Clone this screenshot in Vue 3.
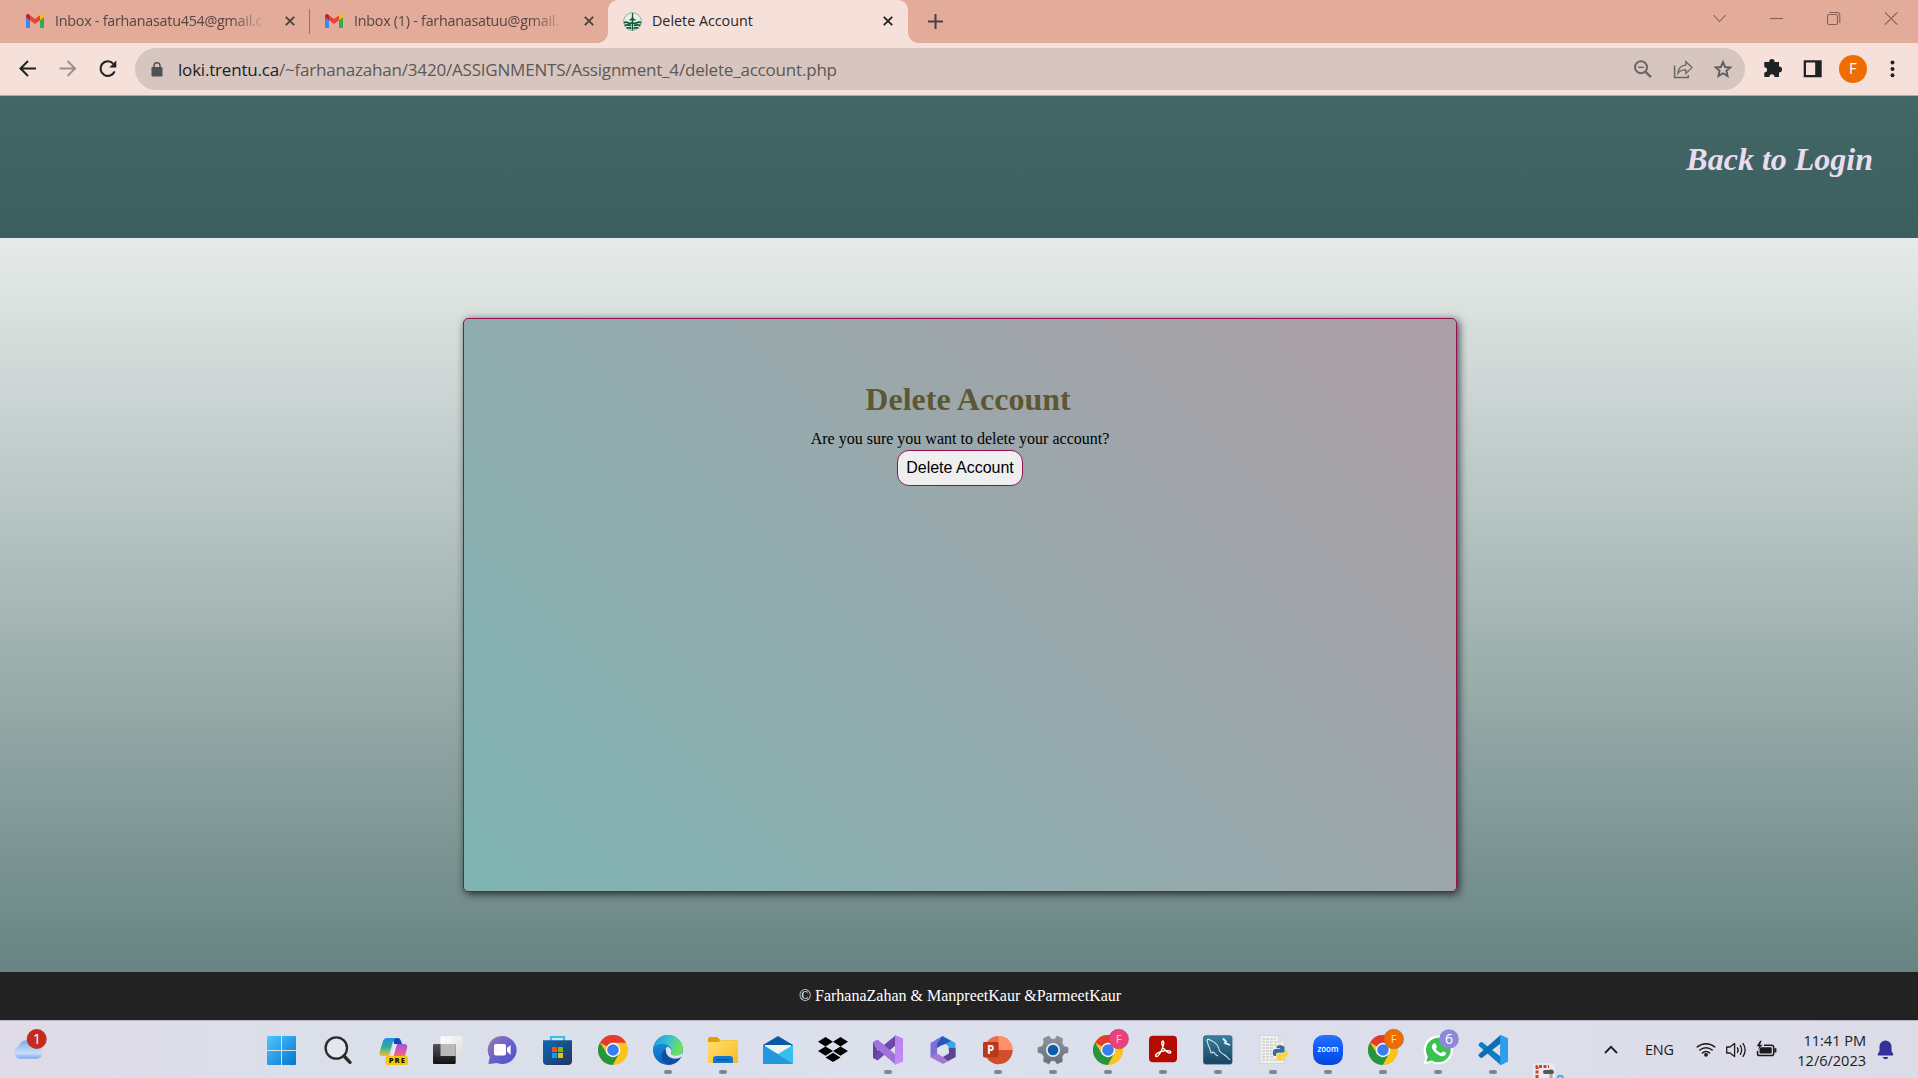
<script setup>
const tabs = [
  { title: 'Inbox - farhanasatu454@gmail.c', kind: 'mail' },
  { title: 'Inbox (1) - farhanasatuu@gmail.', kind: 'mail' },
]
const running = new Set(['edge', 'folder', 'vs', 'ppt', 'gear', 'chromeF', 'acrobat', 'mysql', 'python', 'zoom', 'chromeO', 'whatsapp', 'vscode', 'snip'])
const apps = ['windows', 'search', 'copilot', 'taskview', 'chat', 'store', 'chrome', 'edge', 'folder', 'mail', 'dropbox', 'vs', 'm365', 'ppt', 'gear', 'chromeF', 'acrobat', 'mysql', 'python', 'zoom', 'chromeO', 'whatsapp', 'vscode', 'snip']
</script>

<template>
  <div class="screen">
    <svg class="defs" width="0" height="0" aria-hidden="true">
      <defs>
        <linearGradient id="gWin" x1="0" y1="0" x2="1" y2="1"><stop offset="0" stop-color="#4cc9fb" /><stop offset="1" stop-color="#0673d1" /></linearGradient>
        <linearGradient id="gCopA" x1="0" y1="0" x2="0" y2="1"><stop offset="0" stop-color="#1c8fe8" /><stop offset=".5" stop-color="#2fae9a" /><stop offset="1" stop-color="#e8c52d" /></linearGradient>
        <linearGradient id="gCopB" x1="0" y1="0" x2="0" y2="1"><stop offset="0" stop-color="#a14fe6" /><stop offset="1" stop-color="#fb6a73" /></linearGradient>
        <linearGradient id="gDark" x1="0" y1="0" x2="0" y2="1"><stop offset="0" stop-color="#555" /><stop offset="1" stop-color="#111" /></linearGradient>
        <linearGradient id="gLight" x1="0" y1="0" x2="1" y2="1"><stop offset="0" stop-color="#ffffff" /><stop offset="1" stop-color="#dcdcdc" /></linearGradient>
        <linearGradient id="gChat" x1="0" y1="0" x2="1" y2="1"><stop offset="0" stop-color="#a078b4" /><stop offset=".55" stop-color="#6560cc" /><stop offset="1" stop-color="#4f4fc4" /></linearGradient>
        <linearGradient id="gStore" x1="0" y1="0" x2="1" y2="1"><stop offset="0" stop-color="#0f68b5" /><stop offset="1" stop-color="#23355d" /></linearGradient>
        <linearGradient id="gEdge" x1="0" y1="0" x2="1" y2=".3"><stop offset="0" stop-color="#1b8fdc" /><stop offset=".5" stop-color="#35c1d6" /><stop offset="1" stop-color="#6fe05a" /></linearGradient>
        <linearGradient id="gEdgeB" x1="0" y1="0" x2="0" y2="1"><stop offset="0" stop-color="#1a9ae2" /><stop offset="1" stop-color="#0b60c0" /></linearGradient>
        <linearGradient id="gFold" x1="0" y1="0" x2="1" y2="1"><stop offset="0" stop-color="#ffdf73" /><stop offset="1" stop-color="#fbbb23" /></linearGradient>
        <linearGradient id="gVs" x1="0" y1="0" x2="0" y2="1"><stop offset="0" stop-color="#b184ee" /><stop offset="1" stop-color="#c98bf7" /></linearGradient>
        <linearGradient id="gGear" x1="0" y1="0" x2="0" y2="1"><stop offset="0" stop-color="#8d969c" /><stop offset="1" stop-color="#66707a" /></linearGradient>
        <linearGradient id="gSql" x1="0" y1="0" x2="0" y2="1"><stop offset="0" stop-color="#3a7f9f" /><stop offset="1" stop-color="#17425f" /></linearGradient>
        <linearGradient id="gZoom" x1="0" y1="0" x2="0" y2="1"><stop offset="0" stop-color="#2a72fb" /><stop offset=".45" stop-color="#0b5cff" /><stop offset="1" stop-color="#0747d8" /></linearGradient>
        <linearGradient id="gCloud" x1="0" y1="0" x2="0" y2="1"><stop offset="0" stop-color="#7fa9ec" /><stop offset=".7" stop-color="#c9dffa" /><stop offset="1" stop-color="#7fa6ee" /></linearGradient>
        <symbol id="chrome" viewBox="0 0 30 30">
          <circle cx="15" cy="15" r="15" fill="#fcc31e" />
          <path d="M15 15 L28 7.5 A15 15 0 0 0 2 7.5 Z" fill="#e23c30" />
          <path d="M2 7.5 A15 15 0 0 0 15 30 L21.2 18.6 L15 15 L8.8 18.6 Z" fill="#25963f" />
          <path d="M15 7.8 H28 A15 15 0 0 1 15 30 L21.4 18.6 Z" fill="#fcc31e" />
          <circle cx="15" cy="15" r="7.2" fill="#fff" /><circle cx="15" cy="15" r="5.8" fill="#3b7def" />
        </symbol>
        <symbol id="gmail" viewBox="0 0 18 14">
          <path d="M0 3 V12.5 Q0 14 1.3 14 H4 V6 Z" fill="#4285f4" />
          <path d="M18 3 V12.5 Q18 14 16.7 14 H14 V6 Z" fill="#34a853" />
          <path d="M4 1.2 L9 5 L14 1.2 V6.2 L9 10 L4 6.2 Z" fill="#ea4335" />
          <path d="M0 2 Q0 0 1.8 0 Q3 0 4 1.2 V6.2 L0 3.2 Z" fill="#c5221f" />
          <path d="M18 2 Q18 0 16.2 0 Q15 0 14 1.2 V6.2 L18 3.2 Z" fill="#fbbc04" />
        </symbol>
      </defs>
    </svg>

    <div class="tabstrip">
      <div v-for="(t, i) in tabs" :key="t.title" class="tab" :class="'tab' + i">
        <svg class="gm" width="18" height="14"><use href="#gmail" /></svg>
        <span class="tabtitle fade">{{ t.title }}</span>
        <svg class="x" width="10" height="10" viewBox="0 0 10 10"><path d="M.8 .8 L9.2 9.2 M9.2 .8 L.8 9.2" stroke="#4c3f3e" stroke-width="1.8" /></svg>
      </div>
      <div class="tab active">
        <svg class="trent" width="19" height="19" viewBox="0 0 19 19">
          <circle cx="9.5" cy="9.5" r="8.9" fill="#e8ede6" stroke="#6f9c84" stroke-width=".7" />
          <g fill="none" stroke="#0c5a3a" stroke-width="1.7"><path d="M.8 10.8 Q3 9.6 5 10.8 T9.5 10.6 Q12 12.2 14 10.8 T18.2 10.8" /><path d="M1.6 13.6 Q4 12.4 8.2 13.4 M10.8 13.4 Q15 12.4 17.4 13.6" /><path d="M3.6 16.2 Q6 15 8.4 16.4 M10.6 16.4 Q13 15 15.4 16.2" /></g>
          <path d="M8.9 1 H10.1 V5 Q10.4 7 12.8 7.8 V8.6 H6.2 V7.8 Q8.6 7 8.9 5Z" fill="#0c5a3a" /><path d="M9.5 8 V18.5" stroke="#0c5a3a" stroke-width="1.3" />
        </svg>
        <span class="tabtitle cur">Delete Account</span>
        <svg class="x" width="10" height="10" viewBox="0 0 10 10"><path d="M.8 .8 L9.2 9.2 M9.2 .8 L.8 9.2" stroke="#202124" stroke-width="1.8" /></svg>
      </div>
      <svg class="plus" width="15" height="15" viewBox="0 0 15 15"><path d="M7.5 0 V15 M0 7.5 H15" stroke="#4c3f3e" stroke-width="2" /></svg>
      <svg class="winctl" width="230" height="37" viewBox="0 0 230 37" fill="none" stroke="#8a5f57" stroke-width="1.1">
        <path d="M25.5 15 L31.5 21.5 L37.5 15" /><path d="M82 18.5 H95" />
        <rect x="139.5" y="14.5" width="10" height="10" rx="1.5" /><path d="M141.5 12.5 H149 Q151.8 12.5 151.8 15.3 V23" />
        <path d="M197 12.3 L209.4 24.7 M209.4 12.3 L197 24.7" />
      </svg>
    </div>

    <div class="toolbar">
      <svg class="nav" width="135" height="52" viewBox="0 0 135 52" fill="none" stroke-width="2">
        <path d="M36 25.5 H20.5 M28 18 L20.5 25.5 L28 33" stroke="#202124" />
        <path d="M59.5 25.5 H75 M67.5 18 L75 25.5 L67.5 33" stroke="#9d8f8c" />
        <path d="M114.6 28.3 A7.3 7.3 0 1 1 113.2 20.6" stroke="#202124" stroke-width="2.1" /><path d="M116.3 17.6 V24.6 H109.3 Z" fill="#202124" />
      </svg>
      <div class="omni">
        <svg class="lock" width="12" height="15" viewBox="0 0 12 15"><rect x=".5" y="5" width="11" height="9.5" rx="1.2" fill="#4e5256" /><path d="M3 6 V3.8 A3 3 0 0 1 9 3.8 V6" fill="none" stroke="#4e5256" stroke-width="1.5" /></svg>
        <span class="url"><b>loki.trentu.ca</b>/~farhanazahan/3420/ASSIGNMENTS/Assignment_4/delete_account.php</span>
        <svg width="40" height="42" viewBox="0 0 40 42" fill="none" stroke="#6a6665" stroke-width="2"><circle cx="18" cy="19.3" r="6" /><path d="M22.5 23.8 L28 29.2" stroke-width="2.4" /><path d="M15 19.3 H21" stroke-width="1.4" /></svg>
        <svg width="40" height="42" viewBox="0 0 40 42" fill="none" stroke="#6a6665" stroke-width="1.5"><path d="M11.6 17.5 V29.4 H25.3 V27" /><path d="M15 25.3 Q15.6 17.5 22.8 17.1 V13.5 L29 19.6 L22.8 25.5 V21.8 Q17.5 21.6 15 25.3 Z" stroke-width="1.3" /></svg>
        <svg width="40" height="42" viewBox="0 0 40 42" fill="none" stroke="#5b5f63" stroke-width="1.9"><path d="M20 14.2 L22.1 19 L27.3 19.5 L23.4 22.9 L24.6 28.1 L20 25.3 L15.4 28.1 L16.6 22.9 L12.7 19.5 L17.9 19 Z" /></svg>
      </div>
      <svg class="act" width="40" height="52" viewBox="0 0 40 52"><path d="M11.3 19 H16.2 A2.7 2.9 0 1 1 21.6 19 H26 V23.6 A2.8 2.8 0 1 1 26 29.6 V34 H21.4 A2.5 2.7 0 0 0 16.4 34 H11.3 V29.4 A2.7 2.5 0 0 0 11.3 24.2 Z" fill="#202124" /></svg>
      <svg class="act" width="40" height="52" viewBox="0 0 40 52"><path d="M10.7 17.2 H28.7 V34.2 H10.7 Z M13 19.5 V32 H22.2 V19.5 Z" fill="#202124" fill-rule="evenodd" /></svg>
      <span class="avatar">F</span>
      <svg class="act" width="40" height="52" viewBox="0 0 40 52" fill="#202124"><circle cx="19.5" cy="19.5" r="2" /><circle cx="19.5" cy="26" r="2" /><circle cx="19.5" cy="32.3" r="2" /></svg>
    </div>

    <header class="top"><a class="back">Back to Login</a></header>
    <main class="page">
      <section class="card">
        <h1>Delete Account</h1>
        <p>Are you sure you want to delete your account?</p>
        <button>Delete Account</button>
      </section>
    </main>
    <footer class="foot">© FarhanaZahan &amp; ManpreetKaur &amp;ParmeetKaur</footer>

    <div class="taskbar">
      <svg class="weather" width="60" height="58" viewBox="0 0 60 58">
        <path d="M19 38.7 A6.5 6.5 0 0 1 18.5 26.4 A9.5 9.5 0 0 1 36.5 26.5 A6.2 6.2 0 0 1 37.5 38.7 Z" fill="url(#gCloud)" />
        <circle cx="36.7" cy="19" r="10" fill="#c42b1c" />
        <text x="36.9" y="24.3" font-size="14.5" text-anchor="middle" fill="#fff">1</text>
      </svg>
      <svg v-for="a in apps" :key="a" class="app" width="55" height="58" viewBox="0 0 55 58">
        <g v-if="a === 'windows'" fill="url(#gWin)"><path d="M12 17 Q12 16 13 16 H26 V30 H12 Z M27 16 H40 Q41 16 41 17 V30 H27 Z M12 31 H26 V45 H13 Q12 45 12 44 Z M27 31 H41 V44 Q41 45 40 45 H27 Z" /></g>
        <g v-else-if="a === 'search'" fill="none" stroke="#2b2b2b"><circle cx="26.3" cy="28" r="10.7" fill="#e6e6ee" stroke-width="2.3" /><path d="M34 36 L40 42.3" stroke-width="3.4" stroke-linecap="round" /></g>
        <g v-else-if="a === 'copilot'">
          <path d="M28 18 H33 Q35 18 36 21 L37 24 H29 Z" fill="#1646b8" />
          <path d="M22 18 H32 Q28.5 19 27.5 23 L24 36 H17 Q13.5 36 14.8 31.5 L18 21 Q19 18 22 18 Z" fill="url(#gCopA)" />
          <path d="M31 24 H39 Q43 24 42 28 L40 36 H25.5 Z" fill="url(#gCopB)" /><path d="M29.5 24 H32 L28.5 36 H25.5 Z" fill="#f1e5f8" />
          <rect x="20.5" y="36" width="22.5" height="9" rx="2" fill="#fcc30c" /><text x="31.8" y="43.3" font-size="7.6" font-weight="800" text-anchor="middle" textLength="16" fill="#19140a">PRE</text>
        </g>
        <g v-else-if="a === 'taskview'"><rect x="20.5" y="16.2" width="22.3" height="19.8" rx="1.2" fill="url(#gLight)" /><rect x="13" y="24" width="22.7" height="20" rx="1.2" fill="url(#gDark)" /><path d="M20.5 24 H35.7 V36 H20.5 Z" fill="#b9b9b9" /></g>
        <g v-else-if="a === 'chat'"><path d="M27.5 16 A14.3 14 0 1 1 22 43 L14 44 Q13.2 44 13.6 42.5 L14.7 37 A14.3 14 0 0 1 27.5 16 Z" fill="url(#gChat)" /><rect x="19" y="24" width="12" height="11.5" rx="2" fill="#fff" /><path d="M32 28 L35.6 25 V34.8 L32 31.6 Z" fill="#fff" /></g>
        <g v-else-if="a === 'store'"><path d="M21 22 V17 H34 V22" fill="none" stroke="#35bfef" stroke-width="2.2" /><path d="M13 20.3 H42 V41 Q42 45 38 45 H17 Q13 45 13 41 Z" fill="url(#gStore)" /><path d="M22 27 h5 v5 h-5z" fill="#f25022" /><path d="M28 27 h5 v5 h-5z" fill="#7fba00" /><path d="M22 33 h5 v5 h-5z" fill="#00a4ef" /><path d="M28 33 h5 v5 h-5z" fill="#ffb900" /></g>
        <use v-else-if="a === 'chrome'" href="#chrome" x="13" y="15" width="30" height="30" />
        <g v-else-if="a === 'edge'">
          <circle cx="28" cy="30" r="15" fill="url(#gEdgeB)" />
          <path d="M13.2 28 A15 15 0 0 1 43 29 Q43 35.5 36.5 35.5 Q31 35.5 30.8 33.5 Q33.5 31 30.5 27.5 Q23 20 13.2 28 Z" fill="url(#gEdge)" />
          <path d="M25.8 29.5 Q25 37.5 33.5 38.5 Q37.5 38.8 41 36.8 Q37.5 44 30 44.8 Q21 43 21.5 35 Q22.5 30.8 25.8 29.5 Z" fill="#0f4f9c" />
          <path d="M25.8 30 Q25.5 27.3 28 26.8 Q31.5 28.5 31.8 31 Q31.5 32.5 30.8 33.5 Q31.2 35.4 36 35.6 Q40 35.5 43 32.5 L41.5 36.8 Q37.5 39.5 32 38.3 Q26 36 25.8 30Z" fill="#dfe3ee" />
        </g>
        <g v-else-if="a === 'folder'"><path d="M13 19 Q13 17 15 17 H22 L25.5 20 H43 V25 H13 Z" fill="#e0a106" /><path d="M13 22 H23 L26 20.3 H43 V43 H13 Z" fill="url(#gFold)" /><path d="M18 43 V39 Q18 36 21 36 H35 Q38 36 38 39 V43 Z" fill="#1277cc" /><path d="M21.5 39.8 H34.5" stroke="#0a4f97" stroke-width="1.3" /></g>
        <g v-else-if="a === 'mail'"><path d="M13 25 L28 16 L43 25 V30 H13 Z" fill="#0a5ba6" /><path d="M15 25 H41 V36 H15 Z" fill="#f3f3f3" /><path d="M13 25 L28 34 L43 25 V44 H13 Z" fill="#35c0ef" /><path d="M13 25 L43 44 H13 Z" fill="#2398de" /></g>
        <path v-else-if="a === 'dropbox'" fill="#000" d="M20.5 17 L28 21.7 L20.5 26.4 L13 21.7 Z M35.5 17 L43 21.7 L35.5 26.4 L28 21.7 Z M20.5 26.4 L28 31.1 L20.5 35.8 L13 31.1 Z M35.5 26.4 L43 31.1 L35.5 35.8 L28 31.1 Z M28 32.7 L35.5 37.4 L28 42.1 L20.5 37.4 Z" />
        <g v-else-if="a === 'vs'"><path d="M13 38 L17.5 40.5 L36 25 V15 L13 34 Z" fill="#7048ac" /><path d="M13 22 L17 24.5 V35.5 L13 38 Z" fill="#66409e" /><path d="M13 22 L17.5 19.5 L36 35 V45 L15 27 Z" fill="#a070de" /><path d="M35 15 L43 18.5 V41.5 L35 45 Z" fill="url(#gVs)" /></g>
        <g v-else-if="a === 'm365'"><path d="M28 16 L40.5 23 V34 L33.5 30 V26 L28 22.5 L22 26 L21 19.5 Z" fill="#36a8e8" /><path d="M28 16 L15.5 23 V37 L22 40.5 V26 L30 21 Z" fill="#7b6fd8" /><path d="M27 16.5 L36 21 L28 25 L22 28 V24 Z" fill="#2854bd" /><path d="M22 33.5 L28 37 L34 33.5 V30 L40.5 33 V37 L28 44 L15.5 37 Z" fill="#a777d6" /><path d="M40.5 28 V37 L33 41 L28 37 L34 33.5 V28Z" fill="#5e4490" /><circle cx="28" cy="30" r="4.8" fill="#dfe1ed" /></g>
        <g v-else-if="a === 'ppt'"><circle cx="28.5" cy="30" r="14" fill="#ec6d48" /><path d="M28.5 16 A14 14 0 0 1 42.5 30 H28.5 Z" fill="#ff9069" /><path d="M42.5 30 A14 14 0 0 1 14.8 33 L28.5 30 Z" fill="#d24f2c" /><rect x="13" y="22" width="15.5" height="15.5" rx="1.4" fill="#bb381c" /><text x="20.6" y="34" font-size="11.5" font-weight="700" text-anchor="middle" fill="#fff">P</text></g>
        <g v-else-if="a === 'gear'"><path d="M24 16 L26 19.2 H30 L32 16 L37.5 18.5 L37 23 L39 26.5 L43 27.5 V32.5 L39 33.5 L37 37 L37.5 41.5 L32 44 L30 40.8 H26 L24 44 L18.5 41.5 L19 37 L17 33.5 L13 32.5 V27.5 L17 26.5 L19 23 L18.5 18.5 Z" fill="url(#gGear)" stroke="#77818a" stroke-width=".6" stroke-linejoin="round" /><circle cx="28" cy="30" r="7" fill="#e6edf2" /><circle cx="28" cy="30" r="5.3" fill="#0d5ca9" /></g>
        <g v-else-if="a === 'chromeF'"><use href="#chrome" x="13" y="15" width="30" height="30" /><circle cx="38.7" cy="19" r="9.8" fill="#e9417a" stroke="#a44a6e" stroke-width=".6" /><text x="38.7" y="23.2" font-size="11.5" text-anchor="middle" fill="#f8c3d5">F</text></g>
        <g v-else-if="a === 'acrobat'"><rect x="14" y="15.8" width="28" height="26.5" rx="4" fill="#b30b00" /><path d="M21 36.5 C19 34.5 24.5 31.5 29.5 30.8 C34 30.2 36.5 31 35.5 32.8 C33.5 34 27 29 26.8 22.8 C27.2 19.5 29.3 21 28.6 24.2 C27.8 29 23.5 37.5 21 36.5 Z" fill="none" stroke="#fff" stroke-width="1.4" /></g>
        <g v-else-if="a === 'mysql'"><rect x="13.5" y="15.8" width="28.5" height="28.3" rx="2" fill="url(#gSql)" stroke="#2c6080" stroke-width=".8" /><path d="M17 20 Q18 18.5 21 20.5 Q28 23 29.5 31 Q31.5 33.5 34 34.5 Q37 36.5 40 40 M17 20 Q18 26 20 29 Q20.5 33.5 22 33 Q23 31.5 24 32.5 Q25 34.5 28 36" fill="none" stroke="#d5e6ee" stroke-width="1.1" /><path d="M33 18.5 L36 21.5 L35 23 L40 25" stroke="#e8f2f6" stroke-width="1.8" fill="none" /></g>
        <g v-else-if="a === 'python'"><path d="M15 15.5 H33 L39 21.5 V43.5 H15 Z" fill="#f0f0ee" stroke="#c8c8c8" stroke-width=".6" /><path d="M17 19 H31 M17 22 H36 M17 25 H36 M17 28 H28 M17 31 H27 M17 34 H27 M17 37 H29 M17 40 H36" stroke="#bdbdbd" stroke-width="1.1" stroke-dasharray="3 1" /><path d="M33 15.5 V21.5 H39" fill="#ddd" /><path d="M35 25.3 Q39.5 25.3 39.5 28 V31 Q39.5 32.8 37.5 32.8 H33 Q31 32.8 31 35 V36 H29.5 Q27.8 36 27.8 32.5 T30.5 29 H35 V28.3 H31.5 V27 Q31.5 25.3 35 25.3 Z" fill="#366f9f" /><path d="M36 40.5 Q31.5 40.5 31.5 38 V35 Q31.5 33.5 33.5 33.5 H38 Q40 33.5 40 31 V30 H41 Q42.7 30 42.7 33.5 T40 37 H36 V37.7 H39.3 V39 Q39.3 40.5 36 40.5 Z" fill="#ffd038" /></g>
        <g v-else-if="a === 'zoom'"><rect x="13" y="15" width="30" height="30" rx="10.5" fill="url(#gZoom)" /><text x="28" y="32.3" font-size="9" font-weight="600" text-anchor="middle" textLength="21" lengthAdjust="spacingAndGlyphs" fill="#fff">zoom</text></g>
        <g v-else-if="a === 'chromeO'"><use href="#chrome" x="13" y="15" width="30" height="30" /><circle cx="38.7" cy="19" r="9.8" fill="#ee6c02" stroke="#a66532" stroke-width=".6" /><text x="38.7" y="23.2" font-size="11.5" text-anchor="middle" fill="#ffd8b3">F</text></g>
        <g v-else-if="a === 'whatsapp'"><path d="M13.5 44.5 L15.5 37 A14.8 14.6 0 1 1 21.5 42.7 Z" fill="#fff" /><path d="M16.3 41.8 L17.8 36.5 A12.4 12.2 0 1 1 21.8 40.4 Z" fill="#3cc24f" /><path d="M23.8 23.5 Q25.3 22.8 26 24.5 L26.8 26.7 Q26.8 27.6 25.6 28.8 Q27.4 32 30.9 33.3 L32.4 31.7 Q33 31.2 34 31.7 L36 32.8 Q36.4 34.4 34.8 35.6 Q32.8 37 29.4 35.4 Q24.5 33.2 22.2 28.6 Q21 25.4 23.8 23.5 Z" fill="#fff" /><circle cx="39" cy="19" r="9.8" fill="#8d89d8" /><text x="39" y="24" font-size="14" text-anchor="middle" fill="#fff">6</text></g>
        <g v-else-if="a === 'vscode'"><path d="M35.5 15 L43 18.5 V41.5 L35.5 45 L14 26 Q12.8 25 13.8 24 L15.5 22.3 Q16.3 21.8 17.2 22.3 L35.5 36.5 Z" fill="#0f7ec4" /><path d="M35.5 15 L14 34 Q12.8 35 13.8 36 L15.5 37.7 Q16.3 38.2 17.2 37.7 L35.5 23.5 Z" fill="#0a6db5" /><path d="M35.3 15 L43 18.5 V41.5 L35.3 45 Z" fill="#2b9fee" /></g>
        <g v-else><rect x="13" y="43" width="22" height="20" rx="2" fill="#e9eaee" /><path d="M17 58 V46.5 H29" fill="none" stroke="#d5401a" stroke-width="3" stroke-dasharray="3 1.5" /><path d="M31 49 V58" stroke="#a6a8ac" stroke-width="3" /><path d="M37.5 58 A2.8 2.8 0 0 1 43 58" stroke="#35b1e8" stroke-width="2" fill="none" /></g>
        <rect v-if="running.has(a)" :x="a === 'snip' ? 23 : 24" y="50" :width="a === 'snip' ? 11 : 8" height="4" rx="2" :fill="a === 'snip' ? '#54575c' : '#82858c'" />
      </svg>
      <svg class="chev" width="14" height="9" viewBox="0 0 14 9"><path d="M1 8 L7 1.8 L13 8" fill="none" stroke="#1b1b1b" stroke-width="1.8" /></svg>
      <span class="eng">ENG</span>
      <svg class="tray" width="84" height="24" viewBox="0 0 84 24" fill="none" stroke="#1b1b1b">
        <g stroke-width="1.5"><path d="M1.2 9 A13.3 13.3 0 0 1 18.8 9" stroke-linecap="round" /><path d="M3.8 12 A9.3 9.3 0 0 1 16.2 12" stroke-linecap="round" /><path d="M6.4 15 A5.4 5.4 0 0 1 13.6 15" stroke-linecap="round" /></g><circle cx="10" cy="16.8" r="1.9" fill="#1b1b1b" stroke="none" />
        <path d="M30.7 9 H34 L38.6 5.4 V18.6 L34 15 H30.7 Z" stroke-width="1.3" stroke-linejoin="round" /><path d="M41.3 9.3 Q43 12 41.3 14.8 M44.1 7.2 Q47.2 12 44.1 16.8 M46.8 5.2 Q51.5 12 46.8 18.8" stroke-width="1.3" />
        <path d="M68 7.2 H75.5 Q77.7 7.2 77.7 9.2 V15.5 Q77.7 17.6 75.5 17.6 H63.5 Q61.5 17.6 61.5 15.5 V13" stroke-width="1.5" /><rect x="63.5" y="9.3" width="12.2" height="6.3" rx=".8" fill="#1b1b1b" stroke="none" /><path d="M79.4 10.2 V14.5" stroke-width="2" /><path d="M64 2.5 L60.3 8.5 H63 L61.5 13 L67 6.7 H64.3 L66 2.5 Z" fill="#1b1b1b" stroke="#dfe1ec" stroke-width=".5" />
      </svg>
      <div class="clock"><span class="time">11:41 PM</span><span class="date">12/6/2023</span></div>
      <svg class="bell" width="17" height="20" viewBox="0 0 17 20" fill="#36309a"><path d="M8.5 .5 A6 6 0 0 1 14.5 6.5 V11 L16.3 14.3 Q16.5 15.6 15.3 15.6 H1.7 Q.5 15.6 .7 14.3 L2.5 11 V6.5 A6 6 0 0 1 8.5 .5 Z" /><path d="M5.7 17 H11.3 Q10.5 19.3 8.5 19.3 T5.7 17 Z" /></svg>
    </div>
  </div>
</template>

<style>
body { margin: 0; overflow: hidden; }
</style>
<style scoped>
* { box-sizing: border-box; }
svg { display: block; flex: none; overflow: visible; }
.screen { width: 1918px; height: 1078px; display: flex; flex-direction: column; font-family: "Open Sans", "Noto Sans", sans-serif; overflow: hidden; }
.defs { height: 0; }
.tabstrip { height: 43px; flex: none; background: #e3ab99; display: flex; align-items: center; }
.tab { display: flex; align-items: center; height: 43px; flex: none; padding-bottom: 1px; }
.tab0 { width: 310px; padding-left: 26px; position: relative; }
.tab0::after { content: ""; position: absolute; right: 0; top: 9px; width: 1px; height: 25px; background: #9a7066; }
.tab1 { width: 298px; padding-left: 15px; }
.tabtitle { font-size: 14.3px; line-height: 20px; color: #564644; margin-left: 11px; width: 214px; white-space: nowrap; letter-spacing: -.24px; }
.fade { -webkit-mask-image: linear-gradient(90deg, #000 82%, transparent 100%); mask-image: linear-gradient(90deg, #000 82%, transparent 100%); }
.tab .x { margin-left: 16px; }
.active { width: 300px; background: #f5e1da; border-radius: 10px 10px 0 0; padding-left: 15px; position: relative; }
.active::before, .active::after { content: ""; position: absolute; bottom: 0; width: 10px; height: 10px; }
.active::before { left: -10px; background: radial-gradient(circle at 0 0, transparent 9.5px, #f5e1da 10px); }
.active::after { right: -10px; background: radial-gradient(circle at 100% 0, transparent 9.5px, #f5e1da 10px); }
.active .cur { color: #2a2526; width: 220px; margin-left: 10px; letter-spacing: 0; }
.active .x { margin-left: 11px; }
.plus { margin-left: 20px; }
.winctl { margin-left: auto; align-self: flex-start; }
.toolbar { height: 53px; flex: none; background: #f5e1da; border-bottom: 1px solid #b5a8a3; display: flex; align-items: center; padding-right: 5px; }
.omni { width: 1610px; height: 42px; border-radius: 21px; background: #d7c6bf; display: flex; align-items: center; padding: 0 2px 0 16px; margin-right: 8px; }
.lock { margin-right: 15px; }
.url { flex: 1; font-size: 17px; color: #5d5756; white-space: nowrap; letter-spacing: -.195px; }
.url b { font-weight: 400; color: #202124; }
.avatar { width: 28px; height: 28px; border-radius: 50%; background: #ef6c00; color: #fff; font: 14px/28px Roboto, sans-serif; text-align: center; margin: 0 6px; }
.top { height: 142px; flex: none; background: linear-gradient(#436765, #3b5f5f); display: flex; justify-content: flex-end; padding: 45px 45px 0 0; }
.back { font: italic bold 32px/37px "Liberation Serif", serif; color: #eadcef; }
.page { height: 734px; flex: none; background: linear-gradient(#e6ebe9, #678482); padding: 80px 0 0 463px; }
.card { width: 994px; height: 574px; border: 1px solid #91124f; border-radius: 5px; background: linear-gradient(45deg, #7fb4b3, #ad9fa6); box-shadow: 2px 2px 8px rgba(0, 0, 0, .7); display: flex; flex-direction: column; align-items: center; padding-top: 62px; font-family: "Liberation Serif", serif; }
h1 { margin: 0 0 0 16px; font-size: 32px; line-height: 37px; color: #5e5832; }
p { margin: 12px 0 2px; font-size: 16px; line-height: 18px; color: #000; }
button { width: 126px; height: 36px; padding: 0; border: 1px solid #91124f; border-radius: 12px; background: #efefef; font: 16px/20px "Liberation Sans", sans-serif; color: #000; }
.foot { height: 48px; flex: none; background: #222; color: #fff; font: 16px/48px "Liberation Serif", serif; text-align: center; padding-left: 2px; }
.taskbar { height: 58px; flex: none; border-top: 1px solid #b9b8c4; background: linear-gradient(90deg, #dfdbe7, #dbdfea 16%, #dbe0ec 50%, #dcdeea 80%, #dcdce9); display: flex; align-items: center; color: #1b1b1b; }
.weather { margin-right: 195px; }
.weather, .app { margin-top: -1px; }
.chev { margin-left: 29px; }
.eng { width: 51px; margin-left: 27px; font-size: 14.4px; letter-spacing: -.2px; }
.clock { width: 86px; display: flex; flex-direction: column; align-items: flex-end; font-size: 14.6px; line-height: 20px; letter-spacing: -.05px; }
.bell { margin-left: 11px; }
</style>
